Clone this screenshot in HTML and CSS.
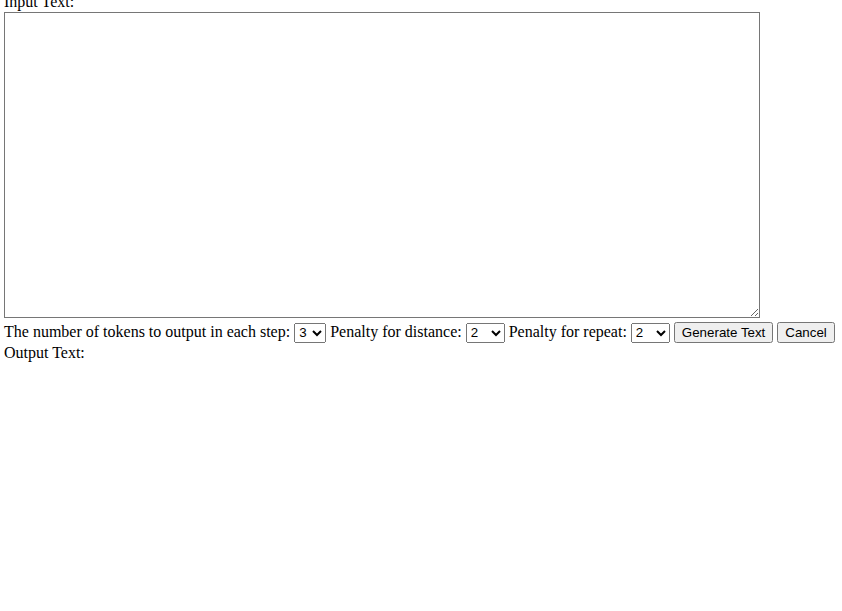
FILE: index.html
```html
<!DOCTYPE html>
<html>
<head>
<meta charset="utf-8">
<link rel="stylesheet" href="styles.css">
</head>
<body class="page">
<div class="label label-input">Input Text:</div>
<textarea class="input-text"></textarea>
<div class="controls">The number of tokens to output in each step: <select class="sel sel-tokens"><option>1</option><option>2</option><option selected>3</option><option>4</option><option>5</option></select> Penalty for distance: <select class="sel sel-wide"><option>1</option><option selected>2</option><option>10</option></select> Penalty for repeat: <select class="sel sel-wide"><option>1</option><option selected>2</option><option>10</option></select> <button class="btn">Generate Text</button> <button class="btn">Cancel</button></div>
<div class="label">Output Text:</div>
<div class="output"></div>
</body>
</html>
```
FILE: styles.css
```css
html, body {
  margin: 0;
  background: #fff;
}
.page {
  padding: 0 4px;
  font-family: "Liberation Serif", "Times New Roman", serif;
  font-size: 16px;
  color: #000;
  overflow: hidden;
}
.label {
  line-height: 18px;
  height: 18px;
}
.label-input {
  margin-top: -7px;
}
.input-text {
  display: block;
  box-sizing: border-box;
  width: 756px;
  height: 306px;
  margin: 1px 0 0 0;
  border: 1px solid #767676;
}
.controls {
  line-height: 18px;
  padding: 4px 0 1px 0;
  white-space: nowrap;
}
.sel {
  font-family: Arial, "Liberation Sans", sans-serif;
  font-size: 13.33px;
  box-sizing: border-box;
  height: 20px;
}
.sel-tokens {
  width: 32px;
}
.sel-wide {
  width: 39px;
}
.btn {
  font-family: Arial, "Liberation Sans", sans-serif;
  font-size: 13.33px;
}
```
